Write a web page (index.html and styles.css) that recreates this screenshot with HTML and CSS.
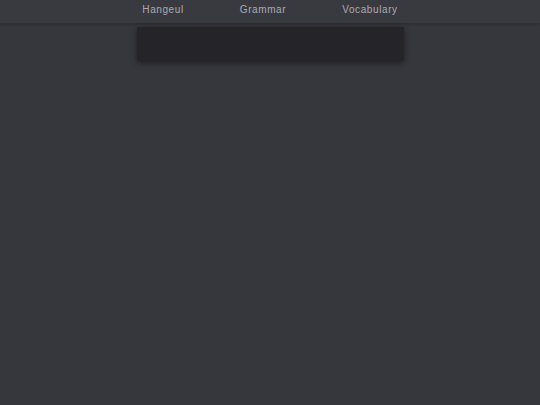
FILE: index.html
```html
<!DOCTYPE html>
<html>
<head>
<meta charset="utf-8">
<link rel="stylesheet" href="styles.css">
</head>
<body>
<header class="topbar">
  <nav class="nav">
    <a class="nav-item">Hangeul</a>
    <a class="nav-item">Grammar</a>
    <a class="nav-item">Vocabulary</a>
  </nav>
</header>
<main class="main">
  <div class="panel"></div>
</main>
</body>
</html>
```
FILE: styles.css
```css
html, body {
  margin: 0;
  padding: 0;
  height: 100%;
  background: #36373c;
  font-family: "Liberation Sans", Arial, sans-serif;
}
.topbar {
  height: 23px;
  background: #393a40;
  box-shadow: 0 1px 3px rgba(0,0,0,0.25);
  position: relative;
  z-index: 1;
}
.nav {
  display: flex;
  justify-content: center;
  gap: 56px;
  height: 100%;
  align-items: center;
  padding-bottom: 5px;
  box-sizing: border-box;
}
.nav-item {
  color: #a9aab0;
  font-size: 10px;
  letter-spacing: 0.6px;
}
.main {
  display: flex;
  justify-content: center;
  padding-top: 4px;
}
.panel {
  width: 267px;
  height: 34px;
  background: #242429;
  border-radius: 0 0 3px 3px;
  box-shadow: 0 2px 6px rgba(0,0,0,0.45);
}
```
